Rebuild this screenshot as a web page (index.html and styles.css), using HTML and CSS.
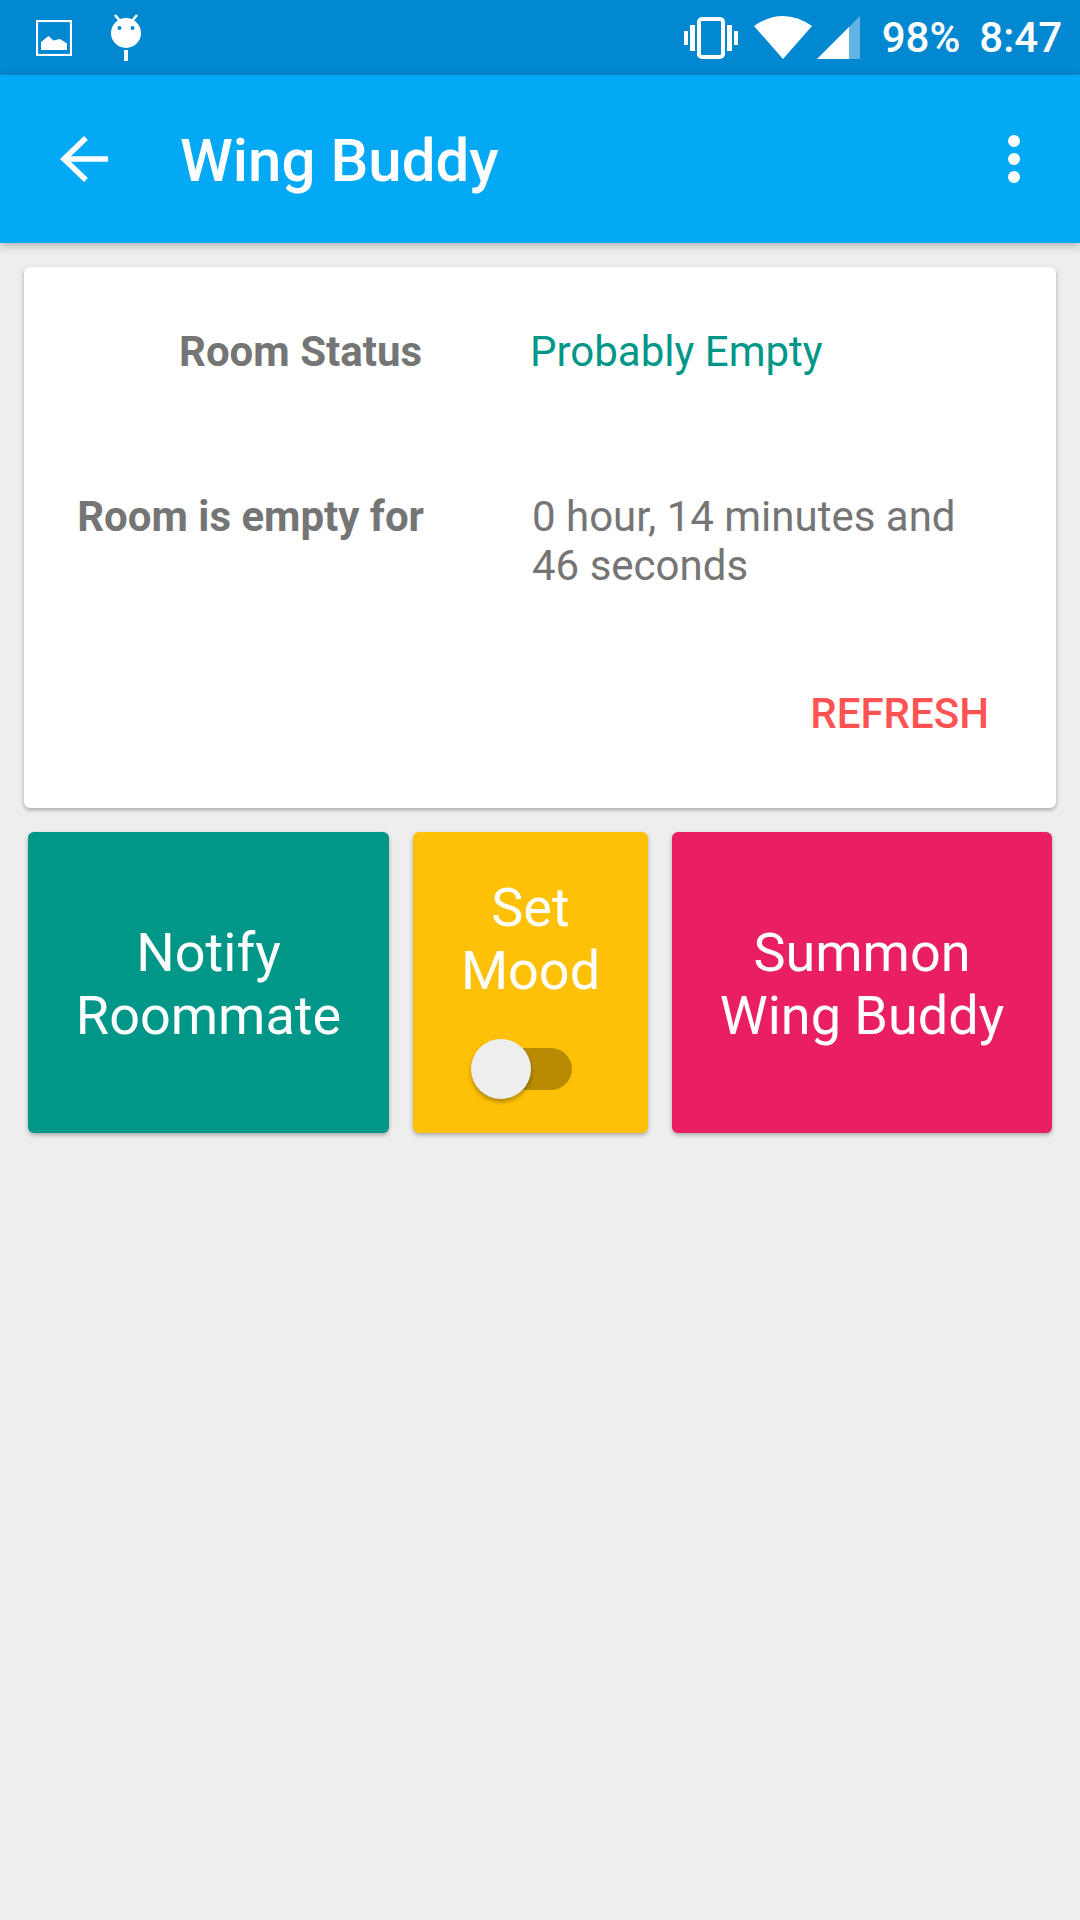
FILE: index.html
```html
<!DOCTYPE html>
<html lang="en">
<head>
  <meta charset="UTF-8">
  <title>Wing Buddy</title>
  <meta name="viewport" content="width=device-width, initial-scale=1.0">
  <link rel="stylesheet" href="styles.css">
</head>
<body>
  <div class="status-bar">
    <div class="status-left">
      <svg width="36" height="36" viewBox="0 0 36 36">
        <rect x="1" y="1" width="34" height="34" fill="none" stroke="#fff" stroke-width="2.2"/>
        <path d="M5 30V22L12.500 16L17.500 20.500L24 19L31 23.500V30Z" fill="#fff"/>
      </svg>
      <svg class="icon-android" width="32" height="48" viewBox="0 0 32 48">
        <path d="M5 1L10 7M27 1L22 7" stroke="#fff" stroke-width="2.6" fill="none"/>
        <circle cx="16" cy="19" r="15" fill="#fff"/>
        <circle cx="9.500" cy="14" r="2" fill="#0288d1"/>
        <circle cx="22.500" cy="14" r="2" fill="#0288d1"/>
        <rect x="14" y="36" width="4" height="11" fill="#fff"/>
      </svg>
    </div>
    <div class="status-right">
      <svg class="icon-vibrate" width="54" height="42" viewBox="0 0 54 42">
        <rect x="15" y="2" width="24" height="38" rx="3" fill="none" stroke="#fff" stroke-width="4"/>
        <rect x="0" y="14" width="4" height="14" fill="#fff"/>
        <rect x="6" y="8" width="5" height="26" fill="#fff"/>
        <rect x="43" y="8" width="5" height="26" fill="#fff"/>
        <rect x="50" y="14" width="4" height="14" fill="#fff"/>
      </svg>
      <svg class="icon-wifi" width="58" height="44" viewBox="0 0 58 44">
        <path d="M0 10Q29 -10 58 10L29 43Z" fill="#fff"/>
      </svg>
      <svg class="icon-signal" width="44" height="44" viewBox="0 0 44 44">
        <path d="M0 43L32 11V43Z" fill="#fff"/>
        <path d="M32 11L43 0V43H32Z" fill="#fff" fill-opacity="0.38"/>
      </svg>
      <span class="battery">98%</span>
      <span class="clock">8:47</span>
    </div>
  </div>

  <div class="app-bar">
    <svg class="icon-back" width="48" height="48" viewBox="0 0 48 48">
      <path d="M48 24H4M26 3L4 24L26 45" fill="none" stroke="#fff" stroke-width="5.500"/>
    </svg>
    <h1 class="title">Wing Buddy</h1>
    <div class="overflow"><i></i><i></i><i></i></div>
  </div>

  <main class="content">
    <section class="card">
      <div class="row row-status">
        <div class="label">Room Status</div>
        <div class="value value-status">Probably Empty</div>
      </div>
      <div class="row row-empty">
        <div class="label">Room is empty for</div>
        <div class="value">0 hour, 14 minutes and<br>46 seconds</div>
      </div>
      <div class="card-actions">
        <span class="refresh">REFRESH</span>
      </div>
    </section>

    <section class="tiles">
      <div class="tile tile-notify">Notify<br>Roommate</div>
      <div class="tile tile-mood">
        <div>Set<br>Mood</div>
        <div class="switch"><span class="switch-thumb"></span></div>
      </div>
      <div class="tile tile-summon">Summon<br>Wing Buddy</div>
    </section>
  </main>
</body>
</html>
```

FILE: styles.css
```css
body {
  margin: 0;
  width: 1080px;
  height: 1920px;
  overflow: hidden;
  background: #eeeeee;
  font-family: Roboto, sans-serif;
}

.status-bar {
  height: 75px;
  box-sizing: border-box;
  padding: 0 18px 0 36px;
  background: #0288d1;
  display: flex;
  align-items: center;
  justify-content: space-between;
  color: #fff;
}
.status-left {
  display: flex;
  align-items: center;
}
.icon-android {
  margin-left: 38px;
}
.status-right {
  display: flex;
  align-items: center;
  font-size: 42px;
  font-weight: 500;
}
.icon-wifi {
  margin-left: 16px;
}
.icon-signal {
  margin-left: 5px;
}
.battery {
  margin-left: 21px;
}
.clock {
  margin-left: 19px;
}

.app-bar {
  position: relative;
  height: 168px;
  box-sizing: border-box;
  padding: 0 60px;
  background: #03a9f4;
  display: flex;
  align-items: center;
  color: #fff;
  box-shadow: 0 3px 8px rgba(0,0,0,0.25);
}
.title {
  margin: 2px 0 0 72px;
  font-size: 60px;
  font-weight: 500;
}
.overflow {
  margin-left: auto;
  display: flex;
  flex-direction: column;
  gap: 6px;
}
.overflow i {
  display: block;
  width: 12px;
  height: 12px;
  border-radius: 50%;
  background: #fff;
}

.content {
  padding: 24px 24px 0;
}
.card {
  height: 541px;
  box-sizing: border-box;
  padding-top: 60px;
  background: #fff;
  border-radius: 6px;
  box-shadow: 0 2px 4px rgba(0,0,0,0.3);
  font-size: 42px;
  line-height: 49px;
  color: #757575;
}
.row {
  display: grid;
  grid-template-columns: 400px 1fr;
  column-gap: 108px;
}
.row-status {
  margin-bottom: 116px;
}
.row-status .label {
  padding-right: 2px;
}
.label {
  text-align: right;
  font-weight: 700;
}
.value-status {
  margin-left: -2px;
  color: #009688;
}
.card-actions {
  margin-top: 99px;
  padding-right: 67px;
  text-align: right;
}
.refresh {
  color: #ff5252;
  font-weight: 500;
}

.tiles {
  margin-top: 24px;
  padding: 0 4px;
  display: grid;
  grid-template-columns: 361px 235px 380px;
  column-gap: 24px;
}
.tile {
  height: 301px;
  box-sizing: border-box;
  padding-top: 3px;
  border-radius: 6px;
  box-shadow: 0 2px 4px rgba(0,0,0,0.3);
  color: #fff;
  font-size: 54px;
  line-height: 63px;
  text-align: center;
  display: flex;
  flex-direction: column;
  align-items: center;
  justify-content: center;
}
.tile-notify {
  background: #009688;
}
.tile-mood {
  padding-top: 44px;
  justify-content: flex-start;
  background: #ffc107;
}
.tile-summon {
  background: #e91e63;
}
.switch {
  position: relative;
  width: 83px;
  height: 42px;
  margin-top: 46px;
  margin-left: -1px;
  border-radius: 21px;
  background: #b78a00;
}
.switch-thumb {
  position: absolute;
  left: -18px;
  top: -9px;
  width: 60px;
  height: 60px;
  border-radius: 50%;
  background: #eeeeee;
  box-shadow: 0 3px 4px rgba(0,0,0,0.3);
}
```
